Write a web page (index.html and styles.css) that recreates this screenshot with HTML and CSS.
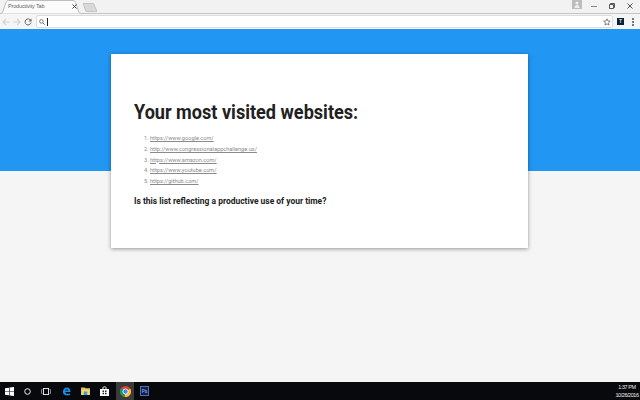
FILE: index.html
```html
<!DOCTYPE html>
<html lang="en">
<head>
    <meta charset="UTF-8">
    <title>Productivity Tab</title>
    <link rel="stylesheet" href="styles.css">
</head>
<body>
    <div class="window">
        <div class="tabstrip">
            <div class="tab">
                <svg class="tab-shape" width="84" height="14" viewBox="0 0 84 14"><path d="M0 13.500h.5C2 13.500 2.500 12.500 3 11L6 2.500C6.300 1.500 7 .5 8.500 .5H73C74.500 .5 75.200 1.500 75.500 2.500L78.500 11C79 12.500 79.500 13.500 81 13.500H84" fill="#fbfbfb" stroke="#bdbdbd"/></svg>
                <span class="tab-title">Productivity Tab</span>
                <svg class="tab-close" width="5" height="5" viewBox="0 0 5 5"><path d="M.5 .5l4 4M4.500 .5l-4 4" stroke="#444" stroke-width="1"/></svg>
            </div>
            <svg class="new-tab" width="14" height="9" viewBox="0 0 14 9"><path d="M0 .5H10.500L14 8.500H3z" fill="#d9d9d9" stroke="#c4c4c4"/></svg>
            <div class="tab-spacer"></div>
            <div class="profile">
                <svg width="10" height="9" viewBox="0 0 10 9"><rect width="10" height="9" fill="#bdbdbd"/><circle cx="5" cy="3" r="1.500" fill="#eee"/><path d="M2.500 8c0-2 1-3 2.500-3s2.500 1 2.500 3z" fill="#eee"/></svg>
            </div>
            <div class="win-buttons">
                <svg width="6" height="6" viewBox="0 0 6 6"><path d="M0 3.500h6" stroke="#888"/></svg>
                <svg width="6" height="6" viewBox="0 0 6 6"><path d="M.5 1.500h4v4h-4zM1.500 1.500v-1h4v4h-1" fill="none" stroke="#555"/></svg>
                <svg width="6" height="6" viewBox="0 0 6 6"><path d="M.5 .5l5 5M5.500 .5l-5 5" stroke="#555"/></svg>
            </div>
        </div>
        <div class="toolbar">
            <svg class="tool" width="8" height="8" viewBox="0 0 8 8"><path d="M7.500 4H1M4 1L1 4l3 3" fill="none" stroke="#d2d2d2" stroke-width="1.100"/></svg>
            <svg class="tool" width="8" height="8" viewBox="0 0 8 8"><path d="M.5 4H7M4 1l3 3-3 3" fill="none" stroke="#d2d2d2" stroke-width="1.100"/></svg>
            <svg class="tool" width="8" height="8" viewBox="0 0 8 8"><path d="M6.700 2.500A3 3 0 1 0 7 4.500" fill="none" stroke="#666" stroke-width="1"/><path d="M7.500 .5v3h-3z" fill="#666"/></svg>
            <div class="omnibox">
                <svg width="6" height="6" viewBox="0 0 6 6"><circle cx="2.400" cy="2.400" r="1.800" fill="none" stroke="#777"/><path d="M3.700 3.700L5.700 5.700" stroke="#777"/></svg>
                <span class="caret"></span>
                <span class="omni-spacer"></span>
                <svg width="8" height="8" viewBox="0 0 8 8"><path d="M4 .8l.95 2.150 2.350 .25-1.750 1.550 .5 2.300L4 5.850 1.950 7.050l.5-2.300L.7 3.200l2.350-.25z" fill="none" stroke="#666" stroke-width=".8"/></svg>
            </div>
            <span class="ext-icon">T</span>
            <svg class="menu-dots" width="2" height="8" viewBox="0 0 2 8"><path d="M0 0h2v2H0zM0 3h2v2H0zM0 6h2v2H0z" fill="#777"/></svg>
        </div>

        <div class="page">
            <div class="band">
                <div class="card">
                    <h1>Your most visited websites:</h1>
                    <ol class="site-list">
                        <li><a href="#">https://www.google.com/</a></li>
                        <li><a href="#">http://www.congressionalappchallenge.us/</a></li>
                        <li><a href="#">https://www.amazon.com/</a></li>
                        <li><a href="#">https://www.youtube.com/</a></li>
                        <li><a href="#">https://github.com/</a></li>
                    </ol>
                    <p class="question">Is this list reflecting a productive use of your time?</p>
                </div>
            </div>
        </div>

        <div class="taskbar">
            <svg class="start" width="9" height="9" viewBox="0 0 9 9"><path d="M0 1.300L4 .7V4.200H0zM4.600 .6L9 0V4.200H4.600zM0 4.800H4V8.300L0 7.700zM4.600 4.800H9V9L4.600 8.400z" fill="#fff"/></svg>
            <svg class="task-icon cortana" width="7" height="7" viewBox="0 0 7 7"><circle cx="3.500" cy="3.500" r="2.800" fill="none" stroke="#eee" stroke-width="1"/></svg>
            <svg class="task-icon view" width="10" height="7" viewBox="0 0 10 7"><rect x="2.500" y=".5" width="5" height="6" fill="none" stroke="#ddd"/><path d="M1.500 1.500H.5v4h1M8.500 1.500h1v4h-1" fill="none" stroke="#888"/></svg>
            <svg class="task-icon edge" width="9" height="9" viewBox="0 0 10 10"><path d="M1 5.500C1 2.500 3 .5 5.500 .5 8 .5 9.500 2.500 9.500 5.500H3.500C3.700 7.500 6 8.300 8.800 7V9C5.500 10.300 1 9 1 5.500zM3.500 4H7C7 2.500 4 2.300 3.500 4z" fill="#1a8fe3"/></svg>
            <svg class="task-icon folder" width="9" height="8" viewBox="0 0 10 9"><path d="M0 .5h4l1 1h5v2H0z" fill="#e8c15a"/><path d="M0 3h10v6H0z" fill="#f6d877"/><path d="M3 5h4v4H3z" fill="#3b9fd8"/></svg>
            <svg class="task-icon store" width="9" height="10" viewBox="0 0 9 10"><path d="M0 3h9v7H0z" fill="#fff"/><path d="M3 3V1.500C3 .5 6 .5 6 1.500V3" fill="none" stroke="#fff"/><path d="M2.500 4.500h1.500v1.500H2.500zM5 4.500h1.500v1.500H5zM2.500 6.800h1.500v1.500H2.500zM5 6.800h1.500v1.500H5z" fill="#222"/></svg>
            <div class="task-active">
                <svg width="11" height="11" viewBox="0 0 22 22"><circle cx="11" cy="11" r="11" fill="#db4437"/><path d="M11 11L1.500 16.500A11 11 0 0 1 2 4.500z" fill="#0f9d58"/><path d="M11 11l9.500-5.500A11 11 0 0 1 9 21.800z" fill="#fbc02d"/><path d="M11 11L1.500 16.500A11 11 0 0 0 9 21.800z" fill="#0f9d58"/><circle cx="11" cy="11" r="5.200" fill="#4285f4" stroke="#fff" stroke-width="1.600"/></svg>
            </div>
            <span class="ps-icon">Ps</span>
            <div class="clock">
                <span>1:37 PM</span>
                <span>10/26/2016</span>
            </div>
        </div>
    </div>
</body>
</html>
```

FILE: styles.css
```css
* {
    margin: 0;
    padding: 0;
    box-sizing: border-box;
}

html, body {
    height: 100%;
    overflow: hidden;
}

body {
    font-family: Roboto, "Liberation Sans", sans-serif;
    background: #f5f5f5;
}

.window {
    height: 400px;
    display: flex;
    flex-direction: column;
}

/* browser chrome */
.tabstrip {
    height: 14px;
    background: #f2f2f2;
    display: flex;
    align-items: flex-start;
    border-bottom: 1px solid #c4c4c4;
}

.tab {
    position: relative;
    width: 84px;
    height: 14px;
    flex: none;
}

.tab-shape {
    position: absolute;
    left: 0;
    top: 0;
}

.tab-title {
    position: absolute;
    left: 8px;
    top: 2px;
    font-family: "Liberation Sans", sans-serif;
    font-size: 5.500px;
    line-height: 9px;
    letter-spacing: -0.15px;
    color: #666;
    white-space: nowrap;
}

.tab-close {
    position: absolute;
    left: 72px;
    top: 4px;
}

.new-tab {
    margin: 3px 0 0 -1px;
    flex: none;
}

.tab-spacer {
    flex: 1;
}

.profile {
    height: 9px;
    line-height: 0;
    margin-right: 9px;
}

.win-buttons {
    display: flex;
    gap: 12px;
    padding: 3px 7px 0 0;
}

.toolbar {
    height: 15px;
    background: #f5f5f5;
    display: flex;
    align-items: center;
    padding: 0 6px 0 2px;
    gap: 3px;
}

.omnibox {
    flex: 1;
    height: 13px;
    margin-left: 1px;
    background: #fff;
    border: 1px solid #dcdcdc;
    border-radius: 2px;
    display: flex;
    align-items: center;
    padding: 0 1px 0 2px;
}

.caret {
    width: 1px;
    height: 8px;
    margin-left: 2px;
    background: #222;
}

.omni-spacer {
    flex: 1;
}

.ext-icon {
    width: 7px;
    height: 7px;
    margin: 0 5px 0 1px;
    background: #0c1f33;
    color: #cde;
    font-size: 5px;
    line-height: 7px;
    font-weight: 700;
    text-align: center;
}

/* page */
.page {
    flex: 1;
    background: #f5f5f5;
}

.band {
    height: 142px;
    background: #2196f3;
    padding-top: 25px;
}

.card {
    width: 417px;
    height: 194px;
    margin-left: 111px;
    padding: 46px 23px 0;
    background: #fff;
    box-shadow: 0 1px 4px rgba(0, 0, 0, 0.4);
}

/* the text in the shot is squeezed sideways, so scale it instead of tracking it */
.card h1 {
    font-size: 20px;
    line-height: 24px;
    font-weight: 700;
    color: #212121;
    white-space: nowrap;
    transform: scaleX(0.905);
    transform-origin: left center;
}

.site-list {
    margin-top: 9px;
    padding-left: 16px;
    font-size: 5.600px;
    line-height: 10.800px;
    color: #8a8a8a;
}

.site-list a {
    color: #8a8a8a;
}

.question {
    margin-top: 8px;
    font-size: 9px;
    line-height: 13px;
    font-weight: 700;
    color: #212121;
    white-space: nowrap;
    transform: scaleX(0.94);
    transform-origin: left center;
}

/* taskbar */
.taskbar {
    height: 18px;
    background: #07090d;
    display: flex;
    align-items: center;
    padding-left: 5px;
}

.task-icon {
    flex: none;
}

.cortana {
    margin-left: 10px;
}

.view {
    margin-left: 10px;
}

.edge {
    margin-left: 11px;
}

.folder {
    margin-left: 10px;
}

.store {
    margin-left: 10px;
}

.task-active {
    width: 18px;
    height: 18px;
    margin-left: 7px;
    background: #3a3a3a;
    display: flex;
    align-items: center;
    justify-content: center;
}

.ps-icon {
    width: 9px;
    height: 10px;
    margin-left: 6px;
    background: #10204a;
    border: 1px solid #4a6fc0;
    color: #9ec2f5;
    font-size: 5px;
    line-height: 8px;
    text-align: center;
}

.clock {
    margin-left: auto;
    margin-right: 1px;
    width: 24px;
    display: flex;
    flex-direction: column;
    align-items: center;
    color: #e8e8e8;
    font-family: "Liberation Sans", sans-serif;
    font-size: 5.500px;
    line-height: 8px;
    letter-spacing: -0.45px;
    white-space: nowrap;
}
```
